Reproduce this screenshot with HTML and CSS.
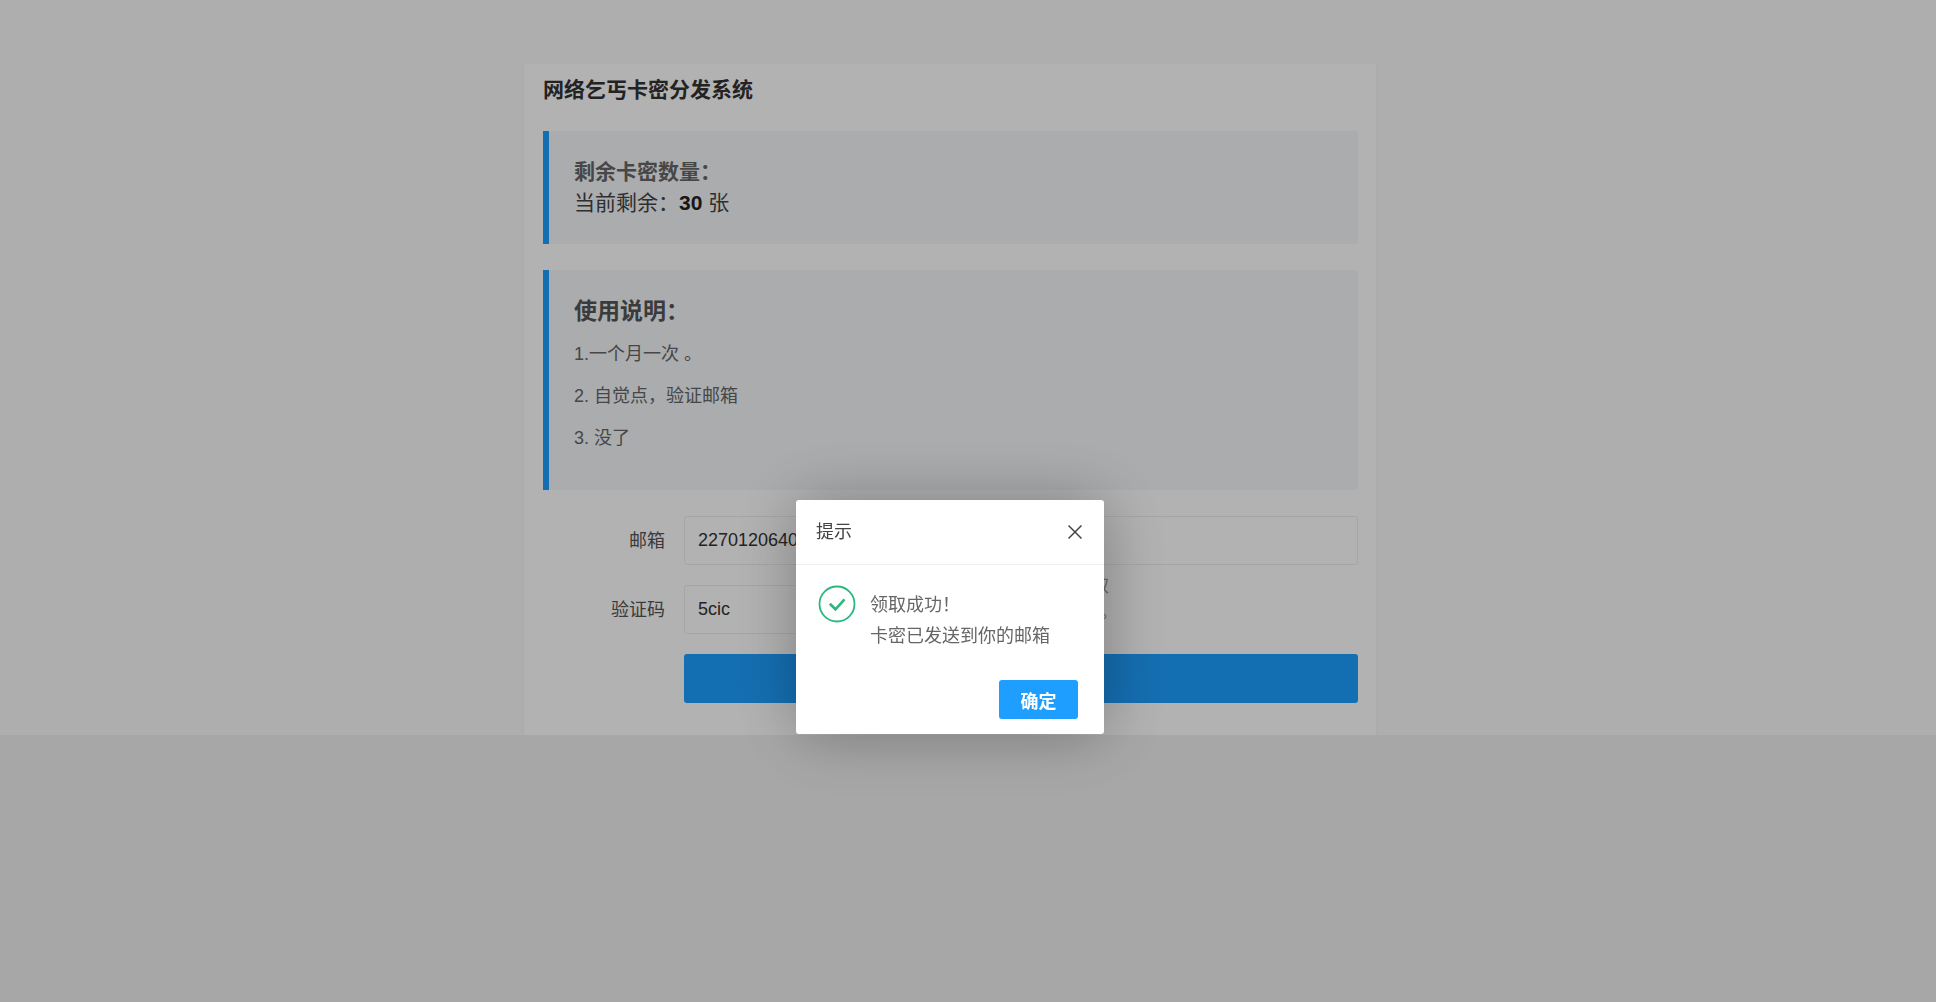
FILE: index.html
```html
<!DOCTYPE html>
<html lang="zh-CN">
<head>
<meta charset="utf-8">
<meta name="viewport" content="width=device-width, initial-scale=1">
<title>网络乞丐卡密分发系统</title>
<link rel="stylesheet" href="styles.css">
</head>
<body>
<div class="page">
  <main class="panel">
    <h1 class="panel-title">网络乞丐卡密分发系统</h1>
    <section class="note">
      <h2 class="stock-title">剩余卡密数量：</h2>
      <p class="stock-text">当前剩余：<strong>30</strong> 张</p>
    </section>
    <section class="note">
      <h2 class="guide-title">使用说明：</h2>
      <p class="guide-text">1.一个月一次 。</p>
      <p class="guide-text">2. 自觉点，验证邮箱</p>
      <p class="guide-text">3. 没了</p>
    </section>
    <form class="form">
      <div class="row">
        <label class="label" for="email">邮箱</label>
        <input class="input" id="email" type="text" value="2270120640">
      </div>
      <div class="row">
        <label class="label" for="code">验证码</label>
        <input class="input input-code" id="code" type="text" value="5cic">
        <p class="hint">点击获取<br>新验证码。</p>
      </div>
      <div class="row">
        <button class="submit" type="button">领取</button>
      </div>
    </form>
  </main>
</div>
<div class="shade">
  <div class="dialog" role="dialog" aria-modal="true" aria-labelledby="dialog-title">
    <header class="dialog-head">
      <h2 class="dialog-title" id="dialog-title">提示</h2>
      <button class="close" type="button" aria-label="关闭">
        <svg width="14" height="14" viewBox="0 0 14 14" fill="none" stroke="#444" stroke-width="1.5"><path d="M.5 .5l13 13M13.500 .5l-13 13"/></svg>
      </button>
    </header>
    <div class="dialog-body">
      <svg class="ok-icon" width="38" height="38" viewBox="0 0 38 38" fill="none" stroke="#2bb880"><circle cx="19" cy="19" r="17.500" stroke-width="1.800"/><path d="M11.800 18.800l5.700 5.500 9-10" stroke-width="2.600"/></svg>
      <p class="message">领取成功！<br>卡密已发送到你的邮箱</p>
    </div>
    <footer class="dialog-foot">
      <button class="confirm" type="button">确定</button>
    </footer>
  </div>
</div>
</body>
</html>
```
FILE: styles.css
```css
* {
  box-sizing: border-box;
}

html {
  background: #f0f0f0;
}

body,
h1,
h2,
p {
  margin: 0;
}

body,
button,
input {
  font-family: "Liberation Sans", "Noto Sans CJK SC", sans-serif;
  font-size: 18px;
}

.page {
  padding: 64px 36px 0 0;
  background: #fafafa;
}

.panel {
  max-width: 852px;
  margin: 0 auto;
  padding: 0 18px 32px 19px;
  background: #fff;
  box-shadow: 0 1px 3px rgba(0, 0, 0, 0.06);
}

.panel-title {
  padding: 10px 0 25px;
  font-size: 21px;
  line-height: 32px;
  color: #333;
}

.note {
  margin-bottom: 26px;
  padding: 26px 25px;
  border-left: 6px solid #1e9fff;
  border-radius: 0 3px 3px 0;
  background: #f4f7fa;
}

.stock-title {
  font-size: 21px;
  font-weight: 700;
  line-height: 30px;
  color: #666;
}

.stock-text {
  font-size: 21px;
  line-height: 31px;
  color: #444;
}

.stock-text strong {
  color: #222;
}

.guide-title {
  margin-bottom: 12px;
  font-size: 23px;
  line-height: 30px;
  color: #555;
}

.guide-text {
  margin-bottom: 10px;
  line-height: 32px;
  color: #666;
}

.row {
  display: flex;
  align-items: flex-start;
  margin-bottom: 19px;
}

.row:last-child {
  margin-bottom: 0;
}

.label {
  width: 141px;
  padding-right: 19px;
  line-height: 50px;
  text-align: right;
  color: #555;
}

.input {
  flex: 1;
  min-width: 0;
  height: 49px;
  padding: 0 13px;
  border: 1px solid #eee;
  border-radius: 3px;
  background: #fff;
  color: #333;
}

.input-code {
  flex: 0 0 244px;
}

.hint {
  width: 290px;
  margin-top: -12px;
  padding-bottom: 10px;
  line-height: 26px;
  text-align: center;
  color: #999;
}

.submit {
  flex: 1;
  height: 49px;
  margin-left: 141px;
  border: 0;
  border-radius: 3px;
  background: #1e9fff;
  color: #fff;
}

.shade {
  position: fixed;
  inset: 0;
  display: flex;
  align-items: center;
  justify-content: center;
  padding: 232px 36px 0 0;
  background: rgba(0, 0, 0, 0.3);
}

.dialog {
  width: 308px;
  border-radius: 3px;
  background: #fff;
  box-shadow: 1px 1px 64px rgba(0, 0, 0, 0.3);
}

.dialog-head {
  display: flex;
  align-items: center;
  justify-content: space-between;
  height: 65px;
  padding: 0 22px 0 20px;
  border-bottom: 1px solid #eee;
}

.dialog-title {
  font-size: 18px;
  font-weight: 400;
  line-height: 26px;
  color: #444;
}

.close {
  display: flex;
  padding: 0;
  border: 0;
  background: none;
}

.dialog-body {
  display: flex;
  gap: 14px;
  padding: 20px 22px 28px;
}

.ok-icon {
  flex: none;
}

.message {
  padding-top: 5px;
  line-height: 31px;
  color: #666;
}

.dialog-foot {
  display: flex;
  justify-content: flex-end;
  padding: 0 26px 15px;
}

.confirm {
  width: 79px;
  height: 39px;
  padding: 0;
  border: 0;
  border-radius: 3px;
  background: #1e9fff;
  color: #fff;
  font-weight: 700;
}
```
